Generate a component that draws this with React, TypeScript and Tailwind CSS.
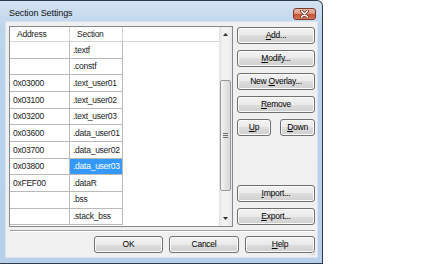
import React from 'react';

const rows: { addr: string; sec: string; sel?: boolean }[] = [
  { addr: '', sec: '.textf' },
  { addr: '', sec: '.constf' },
  { addr: '0x03000', sec: '.text_user01' },
  { addr: '0x03100', sec: '.text_user02' },
  { addr: '0x03200', sec: '.text_user03' },
  { addr: '0x03600', sec: '.data_user01' },
  { addr: '0x03700', sec: '.data_user02' },
  { addr: '0x03800', sec: '.data_user03', sel: true },
  { addr: '0xFEF00', sec: '.dataR' },
  { addr: '', sec: '.bss' },
  { addr: '', sec: '.stack_bss' },
];

const btn =
  'h-[17px] flex items-center justify-center rounded-[3px] border border-[#707070] bg-[linear-gradient(#f2f2f2_0%,#ebebeb_50%,#dddddd_50%,#cfcfcf_100%)] shadow-[inset_0_0_0_1px_#fbfbfb] text-black';

const Key: React.FC<{ k: string; rest: string }> = ({ k, rest }) => (
  <span>
    <u className="decoration-1 underline-offset-1">{k}</u>
    {rest}
  </span>
);

const App: React.FC = () => {
  return (
    <div className="w-[434px] h-[264px] bg-white flex font-['Liberation_Sans',Arial,sans-serif] text-[8.5px] tracking-[-0.25px] leading-none text-[#1a1a1a]">
      <div className="w-[323px] h-[264px] flex flex-col border-t border-r border-b border-[#2c3c50] rounded-tr-[6px] bg-[linear-gradient(#d3e2f2,#bcd3ec_30px,#b7cfe9)]">
        {/* Title bar */}
        <div className="h-[21px] flex justify-between pl-[9px] pr-[6px]">
          <span className="mt-[8px] text-[9px] tracking-[-0.1px] text-[#111]">Section Settings</span>
          <div className="mt-[7px] w-[23px] h-[12px] rounded-[3px] border border-[#7a3a2c] bg-[linear-gradient(#ecb7a8_0%,#de9680_45%,#c65236_55%,#d77457_100%)] flex items-center justify-center">
            <svg width="9" height="8" viewBox="0 0 9 8">
              <path d="M1.5 1 L7.5 7 M7.5 1 L1.5 7" stroke="#6b2a1e" strokeWidth="3" strokeLinecap="round" />
              <path d="M1.5 1 L7.5 7 M7.5 1 L1.5 7" stroke="#ffffff" strokeWidth="1.6" strokeLinecap="round" />
            </svg>
          </div>
        </div>

        {/* Client area */}
        <div className="relative ml-[6px] w-[311px] h-[235px] bg-[#f0f0f0] shadow-[0_0_0_1px_#d6e3f1] flex flex-col pt-[4px] pl-[3px] pr-[2px]">
          <div className="flex h-[201px]">
            {/* List view */}
            <div className="w-[224px] h-[201px] border border-[#828790] bg-white flex">
              <div className="flex-1 flex flex-col">
                <div className="h-[15px] flex border-b border-[#d5d5d5]">
                  <div className="w-[60px] border-r border-[#d5d5d5] flex items-center pl-[7px]">Address</div>
                  <div className="w-[53px] border-r border-[#d5d5d5] flex items-center pl-[7px]">Section</div>
                </div>
                {rows.map((r, i) => (
                  <div key={i} className="h-[16.67px] flex">
                    <div className="w-[60px] border-r border-b border-[#b9b9b9] flex items-center pl-[3px]">{r.addr}</div>
                    <div
                      className={`w-[53px] border-r border-b border-[#b9b9b9] flex items-center pl-[3px] ${
                        r.sel ? 'bg-[#3399ff] text-white' : ''
                      }`}
                    >
                      {r.sec}
                    </div>
                  </div>
                ))}
              </div>
              {/* Scrollbar */}
              <div className="w-[13px] flex flex-col bg-[linear-gradient(90deg,#e3e3e3,#f2f2f2_30%,#f2f2f2_70%,#e8e8e8)]">
                <div className="h-[15px] flex items-center justify-center">
                  <svg width="5" height="3" viewBox="0 0 5 3">
                    <path d="M2.5 0 L5 3 L0 3 Z" fill="#303030" />
                  </svg>
                </div>
                <div className="flex-1 flex flex-col px-[1px]">
                  <div className="mt-[38px] h-[111px] rounded-[2px] border border-[#979797] bg-[linear-gradient(90deg,#f5f5f5,#e4e4e4_50%,#d7d7d7)] flex items-center justify-center">
                    <svg width="5" height="5" viewBox="0 0 5 5">
                      <path d="M0 0.5 H5 M0 2.5 H5 M0 4.5 H5" stroke="#6e6e6e" strokeWidth="1" />
                    </svg>
                  </div>
                </div>
                <div className="h-[15px] flex items-center justify-center">
                  <svg width="5" height="3" viewBox="0 0 5 3">
                    <path d="M0 0 L5 0 L2.5 3 Z" fill="#303030" />
                  </svg>
                </div>
              </div>
            </div>

            {/* Right buttons */}
            <div className="ml-[4px] w-[78px] flex flex-col gap-[6px] pt-[1px] pb-[2px]">
              <div className={`${btn} border-[#3c7fb1] shadow-[inset_0_0_0_1px_#a8def7]`}>
                <Key k="A" rest="dd..." />
              </div>
              <div className={btn}>
                <Key k="M" rest="odify..." />
              </div>
              <div className={btn}>
                <span>
                  New <u className="decoration-1 underline-offset-1">O</u>verlay...
                </span>
              </div>
              <div className={btn}>
                <Key k="R" rest="emove" />
              </div>
              <div className="flex justify-between">
                <div className={`${btn} w-[34px]`}>
                  <Key k="U" rest="p" />
                </div>
                <div className={`${btn} w-[35px]`}>
                  <Key k="D" rest="own" />
                </div>
              </div>
              <div className={`${btn} mt-auto`}>
                <Key k="I" rest="mport..." />
              </div>
              <div className={btn}>
                <Key k="E" rest="xport..." />
              </div>
            </div>
          </div>

          {/* Separator */}
          <div className="mt-[3px] ml-[1px] h-[2px] border-t border-[#a0a0a0] border-b border-b-white" />

          {/* Bottom buttons */}
          <div className="mt-[4px] flex justify-end gap-[6px]">
            <div className={`${btn} w-[69px]`}>OK</div>
            <div className={`${btn} w-[70px]`}>Cancel</div>
            <div className={`${btn} w-[70px]`}>
              <Key k="H" rest="elp" />
            </div>
          </div>

          {/* Size grip */}
          <svg className="absolute right-[1px] bottom-[1px]" width="6" height="6" viewBox="0 0 6 6">
            <rect x="4" y="0" width="1" height="1" fill="#c4c4c4" />
            <rect x="2" y="2" width="1" height="1" fill="#c4c4c4" />
            <rect x="4" y="2" width="1" height="1" fill="#c4c4c4" />
            <rect x="0" y="4" width="1" height="1" fill="#c4c4c4" />
            <rect x="2" y="4" width="1" height="1" fill="#c4c4c4" />
            <rect x="4" y="4" width="1" height="1" fill="#c4c4c4" />
          </svg>
        </div>
      </div>
    </div>
  );
};

export default App;
